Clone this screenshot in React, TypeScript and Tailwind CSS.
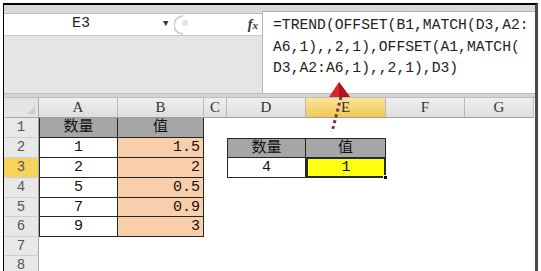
import React from "react";

const mono = "font-['Liberation_Mono','Noto_Sans_CJK_SC',monospace]";

const cols = ["A", "B", "C", "D", "E", "F", "G"];

type CellProps = {
  children?: React.ReactNode;
  className?: string;
};

function Cell({ children, className = "" }: CellProps) {
  return (
    <div className={`flex items-center px-[3px] text-[15px] leading-none text-[#111] ${className}`}>
      {children}
    </div>
  );
}

function RowHead({ n, active }: { n: number; active?: boolean }) {
  return (
    <div
      className={`flex items-center justify-center border-r border-b border-r-[#a8a8a8] border-b-[#cfcfcf] text-[14px] text-[#555] ${
        active ? "bg-[#f5d35c]" : "bg-[#e8e8e8]"
      }`}
    >
      {n}
    </div>
  );
}

export default function App() {
  const tb = "border-[#262626]";
  return (
    <div className={`relative h-[271px] w-[541px] overflow-hidden bg-white ${mono}`}>
      <div className="ml-[3px] mt-[3px] flex w-[535px] flex-col border-t-2 border-l border-r-[3px] border-black border-r-[#4a4a4a]">
        {/* formula bar */}
        <div className="flex h-[88px]">
          <div className="flex w-[258px] flex-col">
            <div className="h-[9px] bg-[#d9d9d9] border-b border-[#bdbdbd]" />
            <div className="flex h-[21px] items-center bg-white">
              <div className="w-[154px] text-center text-[15px] text-[#222]">E3</div>
              <span className="ml-[5px] text-[9px] text-[#333]">▼</span>
              <svg width="20" height="20" viewBox="0 0 20 20" className="ml-[6px]">
                <path d="M9 1 A9 9 0 0 0 9 19" fill="none" stroke="#cfcfcf" strokeWidth="2" />
                <circle cx="11" cy="8" r="3" fill="#e3e3e3" />
              </svg>
              <span className="ml-auto mr-[4px] font-['Liberation_Serif',serif] text-[14px] font-bold italic text-[#333]">
                f<span className="text-[11px]">x</span>
              </span>
            </div>
            <div className="flex-1 border-t border-[#c8c8c8] bg-[#e5e5e5]" />
          </div>
          <div className="flex flex-1 flex-col">
            <div className="h-[6px] bg-[#d9d9d9]" />
            <div className="flex-1 border-l border-t border-[#b5b5b5] bg-white pl-[10px] pt-[3px] text-[14.7px] leading-[21.5px] text-[#222]">
              <div>=TREND(OFFSET(B1,MATCH(D3,A2:</div>
              <div>A6,1),,2,1),OFFSET(A1,MATCH(</div>
              <div>D3,A2:A6,1),,2,1),D3)</div>
            </div>
          </div>
        </div>
        <div className="h-[5px] border-t border-b border-[#bdbdbd] bg-[#d4d4d4]" />

        {/* sheet */}
        <div className="grid grid-cols-[35px_79px_86px_23px_79px_80px_79px_69px] grid-rows-[20px_20px_20px_20px_20px_19px_20px_19px_20px]">
          <div className="flex items-end justify-end border-r border-b border-[#a8a8a8] bg-[#e4e4e4] p-[3px]">
            <div className="h-0 w-0 border-l-[8px] border-t-[8px] border-l-transparent border-t-transparent border-b-[8px] border-b-[#cfcfcf]" />
          </div>
          {cols.map((c) => (
            <div
              key={c}
              className={`flex items-center justify-center border-r border-b border-r-[#b8b8b8] border-b-[#a0a0a0] font-['Liberation_Serif',serif] text-[15px] text-[#333] ${
                c === "E" ? "bg-gradient-to-b from-[#fae49a] to-[#f3c84e]" : "bg-gradient-to-b from-[#efefef] to-[#dedede]"
              }`}
            >
              {c}
            </div>
          ))}

          {/* row 1 */}
          <RowHead n={1} />
          <Cell className={`justify-center border-r border-b border-l ${tb} bg-[#a6a6a6]`}>数量</Cell>
          <Cell className={`justify-center border-r border-b ${tb} bg-[#a6a6a6]`}>值</Cell>
          <Cell />
          <Cell />
          <Cell />
          <Cell />
          <Cell />

          {/* row 2 */}
          <RowHead n={2} />
          <Cell className={`justify-center border-r border-b border-l ${tb}`}>1</Cell>
          <Cell className={`justify-end border-r border-b ${tb} bg-[#f9cfab]`}>1.5</Cell>
          <Cell />
          <Cell className={`justify-center border ${tb} bg-[#a6a6a6]`}>数量</Cell>
          <Cell className={`justify-center border-t border-r border-b ${tb} bg-[#a6a6a6]`}>值</Cell>
          <Cell />
          <Cell />

          {/* row 3 */}
          <RowHead n={3} active />
          <Cell className={`justify-center border-r border-b border-l ${tb}`}>2</Cell>
          <Cell className={`justify-end border-r border-b ${tb} bg-[#f9cfab]`}>2</Cell>
          <Cell />
          <Cell className={`justify-center border-r border-b border-l ${tb}`}>4</Cell>
          <Cell className="relative justify-center border-2 border-t border-[#2a2a2a] bg-[#ffff10] text-[#8a7a10]">
            1
            <div className="absolute -bottom-[4px] -right-[4px] h-[5px] w-[5px] border border-white bg-black" />
          </Cell>
          <Cell />
          <Cell />

          {/* rows 4-6 */}
          {[
            [4, "5", "0.5"],
            [5, "7", "0.9"],
            [6, "9", "3"],
          ].map(([n, a, b]) => (
            <React.Fragment key={n}>
              <RowHead n={n as number} />
              <Cell className={`justify-center border-r border-b border-l ${tb}`}>{a}</Cell>
              <Cell className={`justify-end border-r border-b ${tb} bg-[#f9cfab]`}>{b}</Cell>
              <Cell />
              <Cell />
              <Cell />
              <Cell />
              <Cell />
            </React.Fragment>
          ))}

          {/* rows 7-8 */}
          {[7, 8].map((n) => (
            <React.Fragment key={n}>
              <RowHead n={n} />
              <Cell />
              <Cell />
              <Cell />
              <Cell />
              <Cell />
              <Cell />
              <Cell />
            </React.Fragment>
          ))}
        </div>
      </div>

      {/* red arrow pointing at A6 in the formula */}
      <svg className="absolute left-0 top-0" width="541" height="271" viewBox="0 0 541 271">
        <line
          x1="341"
          y1="97"
          x2="332"
          y2="132"
          stroke="#7b3448"
          strokeWidth="3"
          strokeDasharray="3 3"
        />
        <path d="M339 82 L329 97 L350 97 Z" fill="#d8262c" />
        <path d="M339 82 L339 97 L350 97 Z" fill="#b0151d" />
      </svg>
    </div>
  );
}
